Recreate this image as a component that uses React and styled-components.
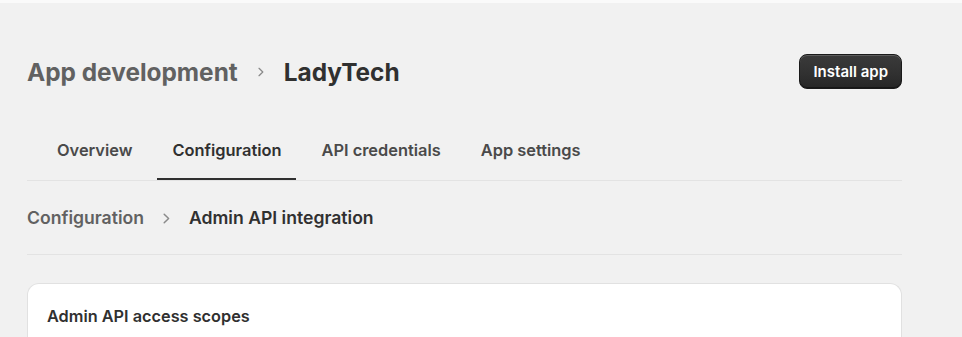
import React from "react";
import styled, { createGlobalStyle } from "styled-components";

const Global = createGlobalStyle`
  html, body { margin: 0; padding: 0; background: #f1f1f1; }
  body { font-family: Inter, "Noto Sans", "Liberation Sans", sans-serif; -webkit-font-smoothing: antialiased; }
`;

const TopStrip = styled.div`
  height: 3px;
  background: #fafafa;
`;

const Page = styled.main`
  padding: 0 60px 0 27px;
`;

const Header = styled.header`
  margin-top: 51px;
  display: flex;
  align-items: center;
  justify-content: space-between;
  height: 34px;
`;

const Crumbs = styled.div`
  display: flex;
  align-items: center;
  gap: ${(p) => p.$gap || 20}px;
  font-size: ${(p) => p.$size}px;
  font-weight: ${(p) => p.$weight || 700};
  line-height: ${(p) => p.$lh}px;
  padding-top: ${(p) => p.$shift || 0}px;
`;

const Crumb = styled.span`
  color: ${(p) => (p.$current ? "#303030" : "#616161")};
`;

const Chevron = styled.svg`
  display: block;
  flex: none;
`;

const Arrow = ({ w = 7, h = 11, color = "#8a8a8a" }) => (
  <Chevron width={w} height={h} viewBox="0 0 7 11" fill="none">
    <path d="M1.2 1.2 L5.6 5.5 L1.2 9.8" stroke={color} strokeWidth="1.5" strokeLinecap="round" strokeLinejoin="round" />
  </Chevron>
);

const Button = styled.button`
  height: 35px;
  padding: 0 13px;
  border-radius: 8px;
  border: 1px solid #1a1a1a;
  background: linear-gradient(180deg, #3a3a3a 0%, #303030 60%, #262626 100%);
  box-shadow: inset 0 1px 0 rgba(255, 255, 255, 0.18), inset 0 -1px 0 rgba(0, 0, 0, 0.4);
  color: #ffffff;
  font-family: inherit;
  font-size: 15px;
  font-weight: 600;
  cursor: pointer;
`;

const TabBar = styled.nav`
  margin-top: 52px;
  display: flex;
  gap: 10px;
  padding-left: 15px;
  border-bottom: 1px solid #e3e3e3;
`;

const Tab = styled.div`
  padding: 0 15px 18px;
  line-height: 20px;
  font-size: 16.4px;
  font-weight: 600;
  color: ${(p) => (p.$active ? "#303030" : "#4a4a4a")};
  border-bottom: 2px solid ${(p) => (p.$active ? "#303030" : "transparent")};
`;

const SubHeader = styled.section`
  padding: 25px 0 24px;
  border-bottom: 1px solid #e3e3e3;
`;

const Card = styled.section`
  margin-top: 28px;
  background: #ffffff;
  border: 1px solid #e1e1e1;
  border-bottom: none;
  border-radius: 12px 12px 0 0;
  padding: 22px 19px 20px;
  height: 60px;
  box-sizing: border-box;
`;

const CardTitle = styled.h2`
  margin: 0;
  font-size: 16.3px;
  font-weight: 600;
  line-height: 20px;
  color: #303030;
`;

export default function App() {
  return (
    <>
      <Global />
      <TopStrip />
      <Page>
        <Header>
          <Crumbs $size={24.4} $lh={32} $shift={2}>
            <Crumb>App development</Crumb>
            <Arrow w={6} h={10} color="#8a8a8a" />
            <Crumb $current>LadyTech</Crumb>
          </Crumbs>
          <Button>Install app</Button>
        </Header>
        <TabBar>
          <Tab>Overview</Tab>
          <Tab $active>Configuration</Tab>
          <Tab>API credentials</Tab>
          <Tab>App settings</Tab>
        </TabBar>
        <SubHeader>
          <Crumbs $size={17.6} $lh={24} $weight={600} $gap={19}>
            <Crumb>Configuration</Crumb>
            <Arrow />
            <Crumb $current>Admin API integration</Crumb>
          </Crumbs>
        </SubHeader>
        <Card>
          <CardTitle>Admin API access scopes</CardTitle>
        </Card>
      </Page>
    </>
  );
}
